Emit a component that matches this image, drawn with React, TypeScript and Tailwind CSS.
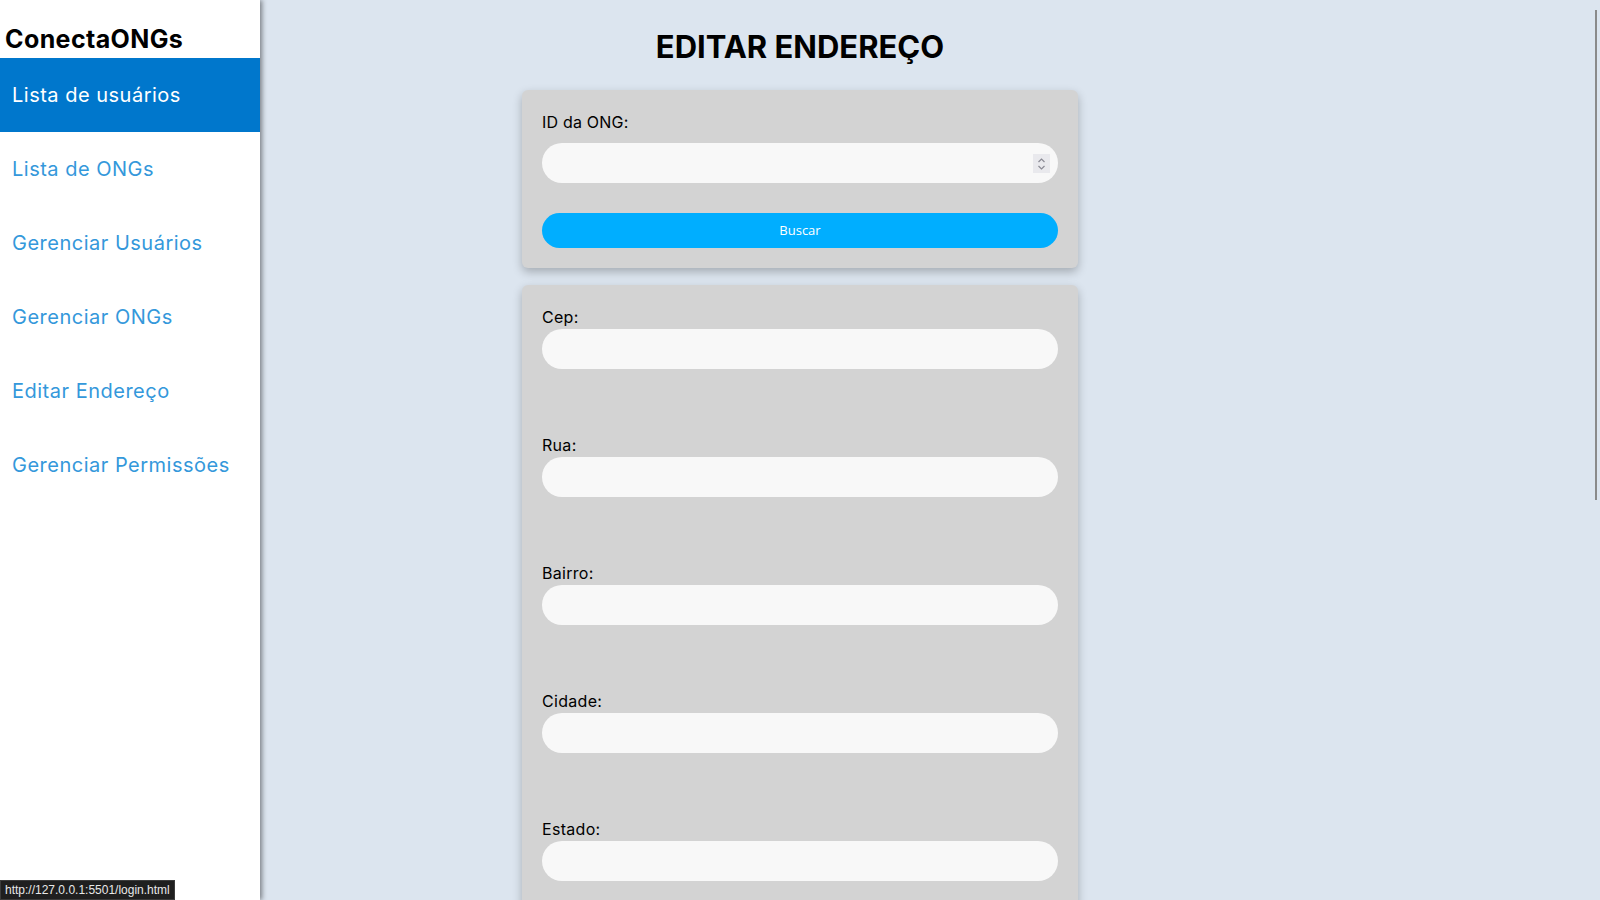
import React from "react";

const navItems = [
  "Lista de usuários",
  "Lista de ONGs",
  "Gerenciar Usuários",
  "Gerenciar ONGs",
  "Editar Endereço",
  "Gerenciar Permissões",
];

const fields = ["Cep:", "Rua:", "Bairro:", "Cidade:", "Estado:"];

const font = { fontFamily: "Inter, 'Noto Sans', sans-serif" };

export default function App() {
  return (
    <div
      className="relative flex h-[900px] w-[1600px] overflow-hidden bg-[#dce5ef] text-black"
      style={font}
    >
      <aside className="z-10 flex w-[260px] shrink-0 flex-col bg-white shadow-[2px_0_5px_rgba(0,0,0,0.45)]">
        <div className="flex h-[58px] items-end pb-[1px] pl-[5px]">
          <span className="text-[25px] font-bold leading-[36px] tracking-[0.4px]">ConectaONGs</span>
        </div>
        <nav className="flex flex-col">
          {navItems.map((item, i) => (
            <a
              key={item}
              className={
                "flex h-[74px] items-center px-3 text-[20px] tracking-[0.5px] " +
                (i === 0 ? "bg-[#0077cc] text-white" : "text-[#3498db]")
              }
            >
              {item}
            </a>
          ))}
        </nav>
      </aside>

      <main className="flex flex-1 flex-col items-center pr-[260px]">
        <h1 className="mt-[23px] mb-[19px] text-[31px] font-bold leading-[48px]">EDITAR ENDEREÇO</h1>

        <section className="w-[556px] rounded-[6px] bg-[#d3d3d3] p-5 shadow-[0_4px_10px_rgba(0,0,0,0.25)]">
          <label className="block text-[16px] leading-[24px] tracking-[0.2px]">ID da ONG:</label>
          <div className="relative mt-[9px]">
            <div className="h-[40px] w-full rounded-[20px] bg-[#f8f8f8]" />
            <div className="absolute right-[8px] top-[11px] flex h-[19px] w-[17px] flex-col items-center justify-center bg-[#e9e9ed]">
              <svg width="9" height="14" viewBox="0 0 9 14" fill="none" stroke="#8a8a94" strokeWidth="1.2">
                <path d="M1.5 5 L4.5 2 L7.5 5" />
                <path d="M1.5 9 L4.5 12 L7.5 9" />
              </svg>
            </div>
          </div>
          <button
            className="mt-[30px] flex h-[35px] w-full items-center justify-center rounded-[18px] bg-[#00aeff] pt-[1px] text-[13px] text-white"
            style={{ fontFamily: "'Open Sans', 'Noto Sans', sans-serif" }}
          >
            Buscar
          </button>
        </section>

        <section className="mt-[17px] w-[556px] rounded-[6px] bg-[#d3d3d3] px-5 pt-5 shadow-[0_4px_10px_rgba(0,0,0,0.25)]">
          {fields.map((f) => (
            <div key={f} className="mb-[64px]">
              <label className="block text-[16px] leading-[24px] tracking-[0.3px]">{f}</label>
              <div className="h-[40px] w-full rounded-[20px] bg-[#f8f8f8]" />
            </div>
          ))}
        </section>
      </main>

      <div className="absolute right-[3px] top-[10px] h-[490px] w-[2px] bg-[#8a8a8a]" />

      <div
        className="absolute bottom-0 left-0 z-20 border border-[#3c3c3c] bg-[#1f1f1f] px-[4px] text-[12px] leading-[18px] text-[#e8e8e8]"
        style={{ fontFamily: "'Liberation Sans', Arial, sans-serif" }}
      >
        http://127.0.0.1:5501/login.html
      </div>
    </div>
  );
}
